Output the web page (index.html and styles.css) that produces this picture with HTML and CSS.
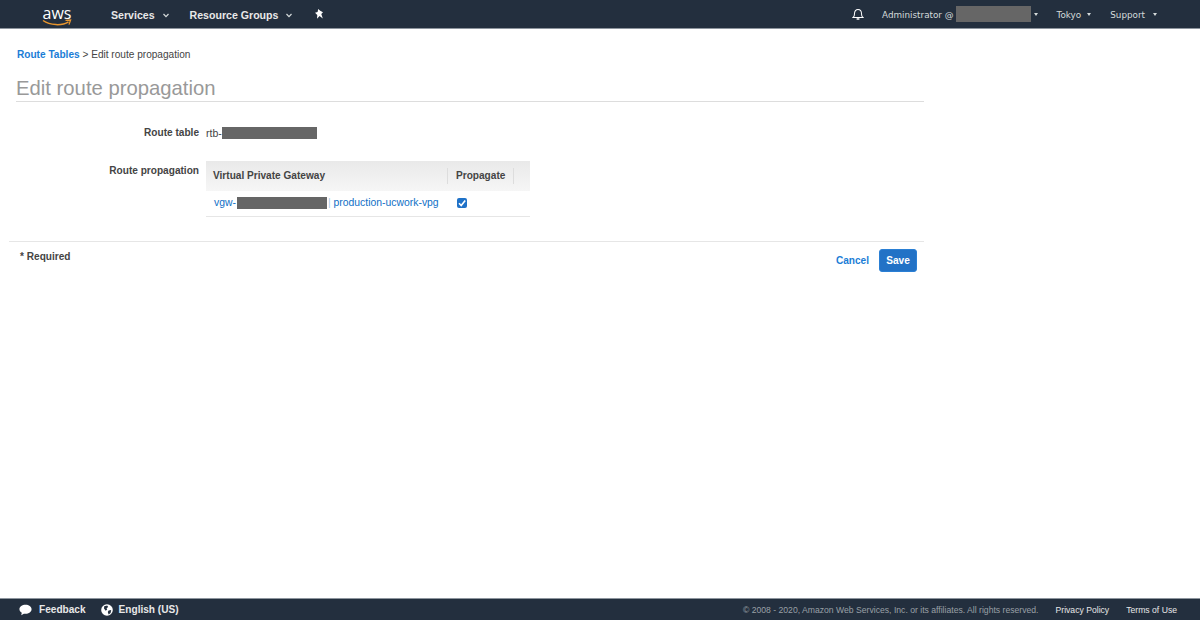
FILE: index.html
```html
<!DOCTYPE html>
<html>
<head>
<meta charset="utf-8">
<title>Edit route propagation</title>
<link rel="stylesheet" href="styles.css">
</head>
<body>

<div class="nav-bar">
    <div class="nav-left">
        <div class="aws-logo">
            <span class="aws-word">aws</span>
            <svg class="aws-smile" width="30" height="8" viewBox="0 0 30 8">
                <path d="M1 1.5C8 6.500 20 7 26.500 2.800" fill="none" stroke="#e8962e" stroke-width="1.500"/>
                <path d="M23.500 1.400L28.600 1L27 5.600" fill="none" stroke="#e8962e" stroke-width="1.300"/>
            </svg>
        </div>
        <a class="nav-item services">Services <svg class="chev" width="6" height="5" viewBox="0 0 6 5"><path d="M.5 1l2.500 2.700L5.500 1" fill="none" stroke="#d5dbdb" stroke-width="1.200"/></svg></a>
        <a class="nav-item groups">Resource Groups <svg class="chev" width="6" height="5" viewBox="0 0 6 5"><path d="M.5 1l2.500 2.700L5.500 1" fill="none" stroke="#d5dbdb" stroke-width="1.200"/></svg></a>
        <svg class="pin" width="9" height="10" viewBox="0 0 9 10"><path d="M3.200 0L5.200 1.800L8 3.200L6.300 5L7.800 9.500L4.600 7L2 9.800L2.300 6L0 3.800L2.600 3Z" fill="#fff"/></svg>
    </div>
    <div class="nav-right">
        <svg class="bell" width="12" height="14" viewBox="0 0 13 14"><path d="M1.200 10.800c1.200-1 1.500-2 1.500-4.200 0-2.400 1.500-4.600 3.800-4.600s3.800 2.200 3.800 4.600c0 2.200.3 3.200 1.500 4.200z" fill="none" stroke="#fff" stroke-width="1.100"/><path d="M5 12.400h3" stroke="#fff" stroke-width="1.600"/></svg>
        <span class="nav-small admin">Administrator @</span>
        <span class="redact redact-account"></span>
        <span class="caret caret-account"></span>
        <span class="nav-small tokyo">Tokyo</span>
        <span class="caret caret-tokyo"></span>
        <span class="nav-small support">Support</span>
        <span class="caret caret-support"></span>
    </div>
</div>

<div class="main">
    <div class="content">
        <div class="breadcrumb"><a class="crumb-link">Route Tables</a> &gt; Edit route propagation</div>
        <h1 class="page-title">Edit route propagation</h1>

        <div class="form-row row-table">
            <div class="form-label">Route table</div>
            <div class="form-value">rtb-<span class="redact redact-rtb"></span></div>
        </div>

        <div class="form-row row-prop">
            <div class="form-label">Route propagation</div>
            <div class="prop-table">
                <div class="prop-head">
                    <div class="cell-gateway">Virtual Private Gateway</div>
                    <div class="cell-propagate">Propagate</div>
                </div>
                <div class="prop-body">
                    <div class="cell-gateway body-link">vgw-<span class="redact redact-vgw"></span><span class="pipe">|</span> production-ucwork-vpg</div>
                    <div class="cell-propagate"><span class="check"><svg width="10" height="10" viewBox="0 0 10 10"><path d="M2 5.200l2.200 2.300L8.200 2.400" fill="none" stroke="#fff" stroke-width="1.600"/></svg></span></div>
                </div>
            </div>
        </div>

        <div class="actions">
            <div class="required">* Required</div>
            <div class="buttons">
                <a class="cancel">Cancel</a>
                <a class="save">Save</a>
            </div>
        </div>
    </div>
</div>

<div class="footer">
    <div class="foot-left">
        <svg width="13" height="12" viewBox="0 0 15 13"><path d="M7.500.5c3.900 0 7 2.300 7 5.200s-3.100 5.200-7 5.200c-.7 0-1.300-.1-1.900-.2L2.600 12.500l.6-2.800C1.500 8.800.5 7.300.5 5.700.5 2.800 3.600.5 7.500.5z" fill="#fff"/></svg>
        <span class="foot-strong feedback">Feedback</span>
        <svg class="globe" width="12" height="12" viewBox="0 0 12 12"><circle cx="6" cy="6" r="5.800" fill="#fff"/><path d="M3.200 2.200l3-.8 1 1.600-1.600 1.200.6 1.400-1.500 1.200L3 4.500zM7.600 6.400l2.600-.4-.6 3-2 1.400-.8-2.400z" fill="#232f3e"/></svg>
        <span class="foot-strong lang">English (US)</span>
    </div>
    <div class="foot-right">
        <span class="copyright">© 2008 - 2020, Amazon Web Services, Inc. or its affiliates. All rights reserved.</span>
        <span class="foot-link">Privacy Policy</span>
        <span class="foot-link">Terms of Use</span>
    </div>
</div>

</body>
</html>
```

FILE: styles.css
```css
html, body {
    margin: 0;
    padding: 0;
    height: 100%;
}

body {
    display: flex;
    flex-direction: column;
    height: 620px;
    overflow: hidden;
    background-color: #ffffff;
    font-family: "Liberation Sans", Arial, sans-serif;
    font-size: 10.100px;
    color: #444444;
}

/* top bar */
.nav-bar {
    display: flex;
    justify-content: space-between;
    align-items: center;
    height: 28px;
    background-color: #232f3e;
    border-bottom: 1px solid #8d959e;
    color: #eeeeee;
}

.nav-left, .nav-right {
    display: flex;
    align-items: center;
}

.aws-logo {
    display: flex;
    flex-direction: column;
    align-self: flex-start;
    width: 30px;
    margin-left: 42px;
    margin-top: 3px;
}

.aws-word {
    font-family: "Open Sans", sans-serif;
    font-size: 16px;
    line-height: 16px;
    text-align: center;
    color: #ffffff;
}

.aws-smile {
    margin-top: -2px;
}

.nav-item {
    padding-top: 2px;
    font-size: 10.600px;
    font-weight: bold;
    color: #e8e8e8;
}

.services {
    margin-left: 39px;
}

.groups {
    margin-left: 21px;
}

.chev {
    margin-left: 5px;
    vertical-align: 1px;
}

.pin {
    margin-left: 23px;
    margin-top: -1px;
}

.nav-small {
    padding-top: 1px;
    font-family: "DejaVu Sans", sans-serif;
    font-size: 8.800px;
    color: #d5dbdb;
}

.bell {
    margin-right: 18px;
}

.redact {
    display: inline-block;
    background-color: #666666;
}

.redact-account {
    width: 75px;
    height: 16px;
    margin-left: 2px;
}

.caret {
    width: 0;
    height: 0;
    border-left: 2.500px solid transparent;
    border-right: 2.500px solid transparent;
    border-top: 3px solid #d5dbdb;
}

.caret-account {
    margin-left: 3px;
}

.caret-tokyo {
    margin-left: 6px;
}

.caret-support {
    margin-left: 8px;
}

.tokyo {
    margin-left: 19px;
}

.support {
    margin-left: 19px;
}

.nav-right {
    padding-right: 43px;
}

/* page body */
.main {
    flex: 1;
}

.content {
    width: 915px;
    margin-left: 9px;
}

.breadcrumb {
    margin-top: 19px;
    margin-left: 8px;
    line-height: 14px;
    color: #444444;
}

.crumb-link {
    font-weight: bold;
    color: #1b7dd6;
}

.page-title {
    margin: 14px 0 0 7px;
    border-bottom: 1px solid #dddddd;
    font-size: 20.300px;
    font-weight: normal;
    line-height: 25px;
    color: #999999;
}

.form-row {
    display: flex;
}

.form-label {
    width: 190px;
    line-height: 14px;
    text-align: right;
    font-weight: bold;
    color: #444444;
}

.row-table {
    height: 14px;
    margin-top: 24px;
    align-items: center;
}

.form-value {
    display: flex;
    align-items: center;
    margin-left: 7px;
    font-size: 10.500px;
    color: #444444;
}

.redact-rtb {
    width: 95px;
    height: 12px;
}

.row-prop {
    margin-top: 21px;
}

.row-prop .form-label {
    padding-top: 3px;
}

.prop-table {
    width: 324px;
    margin-left: 7px;
}

.prop-head, .prop-body {
    display: flex;
    align-items: center;
}

.prop-head {
    height: 30px;
    background: linear-gradient(#e9e9e9, #f6f6f6);
    font-weight: bold;
    color: #444444;
}

.prop-head .cell-gateway {
    border-right: 1px solid #dddddd;
}

.prop-head .cell-propagate {
    width: 57px;
    line-height: 16px;
    border-right: 1px solid #dddddd;
}

.cell-gateway {
    width: 242px;
    padding-left: 7px;
    box-sizing: border-box;
    line-height: 16px;
}

.cell-propagate {
    padding-left: 8px;
}

.prop-body {
    height: 25px;
    border-bottom: 1px solid #e6e6e6;
}

.prop-body .cell-propagate {
    padding-left: 9px;
}

.body-link {
    display: flex;
    align-items: center;
    padding-left: 8px;
    padding-bottom: 1px;
    white-space: pre;
    font-size: 10.400px;
    color: #0f6fc6;
}

.redact-vgw {
    width: 90px;
    height: 12px;
    margin-left: 1px;
}

.pipe {
    margin-left: 1px;
    color: #a9c6e4;
}

.check {
    display: flex;
    width: 10px;
    height: 10px;
    margin-top: -2px;
    border-radius: 2px;
    background-color: #1f72c8;
}

.actions {
    display: flex;
    justify-content: space-between;
    margin-top: 24px;
    padding: 7px 7px 0 11px;
    border-top: 1px solid #e6e6e6;
}

.required {
    margin-top: 2px;
    font-weight: bold;
}

.buttons {
    display: flex;
    align-items: center;
    gap: 10px;
}

.cancel {
    font-weight: bold;
    color: #1b7dd6;
}

.save {
    width: 36px;
    height: 21px;
    border-radius: 3px;
    background-color: #2272c6;
    border: 1px solid #2a7fd4;
    text-align: center;
    font-weight: bold;
    line-height: 21px;
    color: #ffffff;
}

/* footer */
.footer {
    display: flex;
    justify-content: space-between;
    align-items: center;
    height: 21px;
    background-color: #232f3e;
    border-top: 1px solid #8d959e;
}

.foot-left, .foot-right {
    display: flex;
    align-items: center;
}

.foot-left {
    padding-left: 19px;
}

.foot-strong {
    font-weight: bold;
    font-size: 10.100px;
    color: #e8e8e8;
}

.feedback {
    margin-left: 7px;
    margin-right: 15px;
}

.lang {
    margin-left: 6px;
}

.foot-right {
    padding-right: 23px;
}

.copyright {
    font-size: 8.650px;
    color: #9aa0a6;
}

.foot-link {
    margin-left: 17px;
    font-size: 8.650px;
    color: #e8e8e8;
}
```
